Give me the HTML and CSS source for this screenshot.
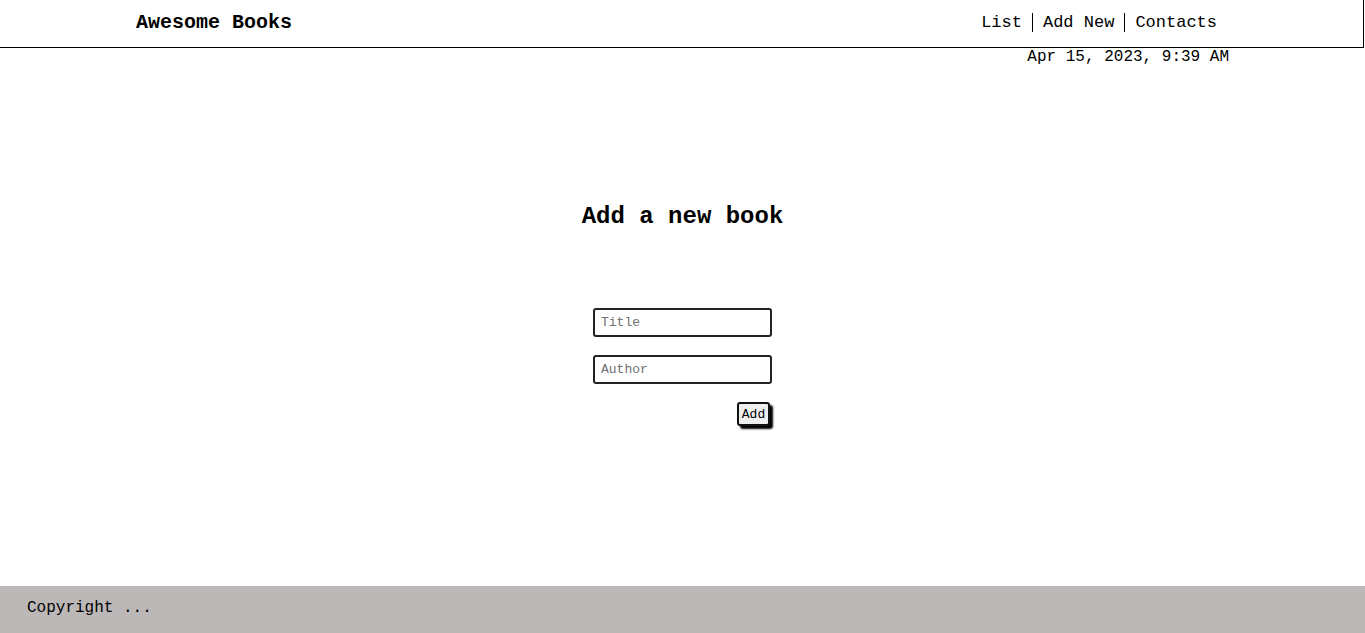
FILE: index.html
```html
<!DOCTYPE html>
<html lang="en">
<head>
<meta charset="utf-8">
<title>Awesome Books</title>
<link rel="stylesheet" href="styles.css">
</head>
<body>
<header class="topbar">
  <h1 class="brand">Awesome Books</h1>
  <nav>
    <ul class="nav-list">
      <li class="nav-item">List</li>
      <li class="nav-item">Add New</li>
      <li class="nav-item">Contacts</li>
    </ul>
  </nav>
</header>
<p class="date">Apr 15, 2023, 9:39 AM</p>
<main class="content">
  <h2 class="heading">Add a new book</h2>
  <form class="book-form">
    <input class="field" type="text" placeholder="Title">
    <input class="field" type="text" placeholder="Author">
    <button class="add-btn" type="button">Add</button>
  </form>
</main>
<footer class="footer">Copyright ...</footer>
</body>
</html>
```
FILE: styles.css
```css
* { box-sizing: border-box; }
html, body { margin: 0; padding: 0; }
body {
  font-family: "Liberation Mono", "Courier New", monospace;
  color: #000;
  background: #fff;
  min-height: 100vh;
  display: flex;
  flex-direction: column;
}
.topbar {
  height: 48px;
  width: 1364px;
  border-right: 1px solid #000;
  border-bottom: 1px solid #000;
  display: flex;
  align-items: center;
  justify-content: space-between;
  padding: 0 146px 0 136px;
}
.brand {
  margin: 0;
  font-size: 20px;
  font-weight: bold;
  line-height: 22px;
  margin-top: -2px;
}
.nav-list {
  list-style: none;
  margin: 0;
  padding: 0;
  display: flex;
  margin-top: -2px;
}
.nav-item {
  font-size: 17px;
  line-height: 19px;
  padding: 0 10px;
  border-left: 1px solid #000;
}
.nav-item:first-child { border-left: none; padding-left: 0; }
.nav-item:last-child { padding-right: 0; }
.date {
  margin: 0;
  text-align: right;
  padding-right: 136px;
  font-size: 16px;
  line-height: 18px;
}
.content {
  flex: 1;
  display: flex;
  flex-direction: column;
  align-items: center;
}
.heading {
  margin: 137px 0 0;
  font-size: 24px;
  line-height: 28px;
  font-weight: bold;
}
.book-form {
  margin-top: 77px;
  width: 179px;
  display: flex;
  flex-direction: column;
  gap: 18px;
}
.field {
  width: 179px;
  height: 29px;
  border: 2px solid #222;
  border-radius: 3px;
  padding: 0 6px;
  font-family: "Liberation Mono", "Courier New", monospace;
  font-size: 13px;
  background: #fff;
  outline: none;
}
.field::placeholder { color: #707070; }
.add-btn {
  align-self: flex-end;
  margin-right: 2px;
  width: 33px;
  height: 24px;
  padding: 0;
  border: 2px solid #111;
  border-radius: 3px;
  background: #efefef;
  font-family: "Liberation Mono", "Courier New", monospace;
  font-size: 13px;
  color: #000;
  box-shadow: 3px 3px 2px #000;
}
.footer {
  height: 47px;
  background: #bcb8b7;
  display: flex;
  align-items: center;
  padding: 0 0 3px 27px;
  font-size: 16px;
}
```
